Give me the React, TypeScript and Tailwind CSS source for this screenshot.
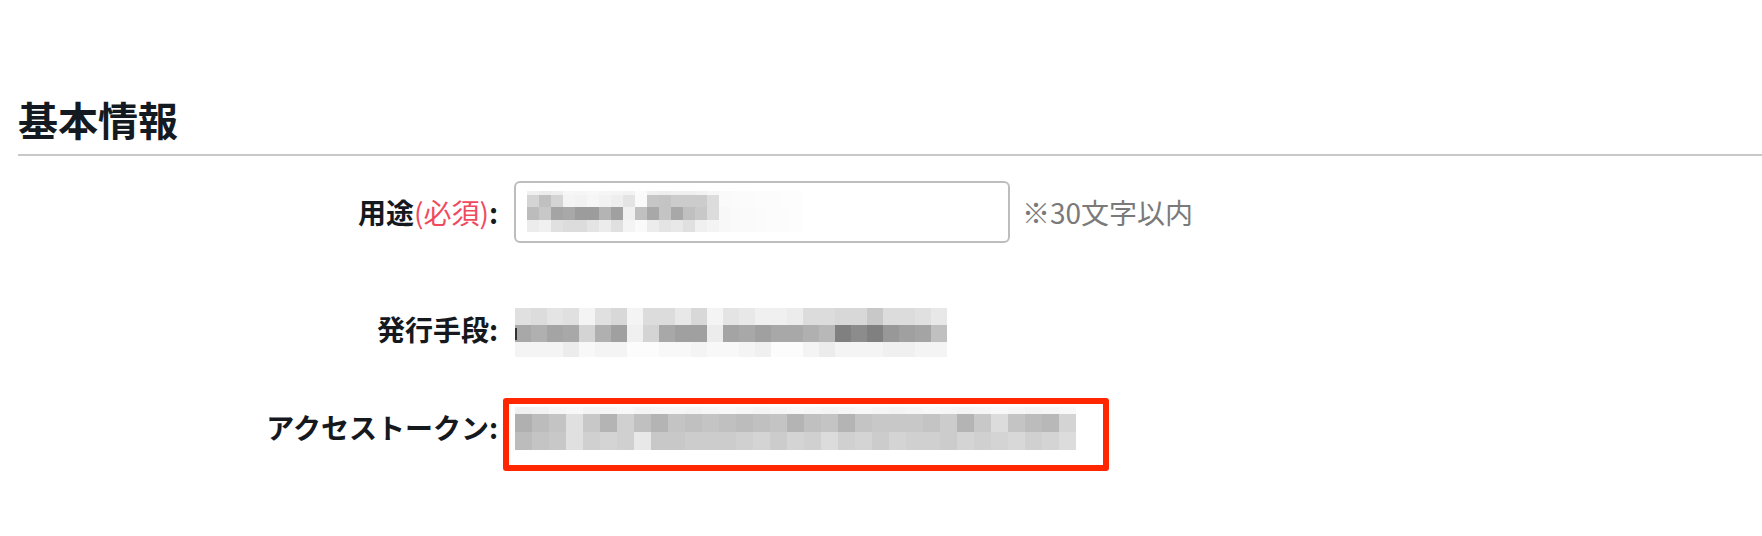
import React from 'react';

type Row = { h: number; v: number[] };

// pixelated (blurred-out) values, given as gray levels per cell
const purposeCells: Row[] = [
  { h: 4, v: [0xf0, 0xec, 0xee, 0xf6, 0xf6, 0xf8, 0xf6, 0xf4, 0xf2, 0xfb, 0xf0, 0xee, 0xf0, 0xf0, 0xf2, 0xf6, 0xfa, 0xfb, 0xfb, 0xfc, 0xfc, 0xfd, 0xfd] },
  { h: 12, v: [0xd4, 0xc0, 0xd4, 0xf4, 0xf2, 0xf6, 0xf2, 0xee, 0xe4, 0xfa, 0xc6, 0xc4, 0xcc, 0xcc, 0xcc, 0xdc, 0xfa, 0xfb, 0xfb, 0xfc, 0xfc, 0xfd, 0xfd] },
  { h: 13, v: [0xbc, 0xc8, 0xa4, 0xa8, 0x9c, 0x9c, 0xb4, 0xa0, 0xf0, 0xc0, 0xa8, 0xc4, 0xa8, 0xc0, 0xc8, 0xdc, 0xf8, 0xfa, 0xfa, 0xfb, 0xfc, 0xfc, 0xfd] },
  { h: 12, v: [0xec, 0xf0, 0xe0, 0xdc, 0xdc, 0xe4, 0xec, 0xe0, 0xf4, 0xfa, 0xec, 0xe4, 0xe8, 0xe0, 0xf0, 0xf4, 0xf8, 0xfa, 0xfa, 0xfb, 0xfc, 0xfc, 0xfd] },
];

const methodCells: Row[] = [
  { h: 17, v: [0xe0, 0xdc, 0xe4, 0xe0, 0xf4, 0xe0, 0xd8, 0xf4, 0xdc, 0xdc, 0xe8, 0xd8, 0xf4, 0xe4, 0xe8, 0xf0, 0xf0, 0xec, 0xdc, 0xdc, 0xd8, 0xd8, 0xc8, 0xdc, 0xdc, 0xe0, 0xe8] },
  { h: 17, v: [0xa8, 0xb0, 0xa4, 0xa8, 0xd4, 0xb0, 0xa0, 0xf0, 0xd4, 0xa8, 0xa0, 0xa0, 0xec, 0xa4, 0xa8, 0xa0, 0xa8, 0xa8, 0xb0, 0xb8, 0x80, 0x8c, 0x80, 0x98, 0xa0, 0xa4, 0xc0] },
  { h: 15, v: [0xf4, 0xf4, 0xf4, 0xec, 0xf8, 0xf4, 0xf4, 0xfc, 0xfc, 0xf8, 0xf8, 0xf4, 0xf8, 0xf8, 0xf4, 0xf0, 0xfc, 0xfc, 0xf4, 0xec, 0xf4, 0xf4, 0xf4, 0xf0, 0xf0, 0xf4, 0xf4] },
];

const tokenCells: Row[] = [
  { h: 7, v: [0xf0, 0xf2, 0xf6, 0xf8, 0xf4, 0xf6, 0xf8, 0xf4, 0xf6, 0xf6, 0xf4, 0xf6, 0xf8, 0xf6, 0xf4, 0xf6, 0xf8, 0xf6, 0xf4, 0xf6, 0xf8, 0xf6, 0xf4, 0xf6, 0xf8, 0xf6, 0xf4, 0xf6, 0xf8, 0xf6, 0xf4, 0xf6, 0xf8] },
  { h: 18, v: [0xb0, 0xbc, 0xc4, 0xe0, 0xc8, 0xb4, 0xd0, 0xc0, 0xb4, 0xc4, 0xc0, 0xc4, 0xc0, 0xbc, 0xc0, 0xc4, 0xb4, 0xc0, 0xc4, 0xb4, 0xc4, 0xc8, 0xc8, 0xc8, 0xc4, 0xcc, 0xb4, 0xc8, 0xdc, 0xc4, 0xbc, 0xb8, 0xd4] },
  { h: 18, v: [0xbc, 0xc4, 0xc8, 0xe0, 0xd0, 0xd4, 0xd0, 0xe8, 0xc8, 0xc8, 0xcc, 0xcc, 0xcc, 0xd0, 0xd4, 0xcc, 0xd4, 0xd0, 0xdc, 0xd0, 0xd4, 0xcc, 0xd4, 0xd0, 0xd0, 0xcc, 0xd4, 0xd0, 0xd4, 0xd8, 0xd0, 0xd4, 0xdc] },
];

function Mosaic({ rows, cell }: { rows: Row[]; cell: number }) {
  return (
    <div className="flex flex-col">
      {rows.map((r, i) => (
        <div key={i} className="flex">
          {r.v.map((g, j) => (
            <div key={j} style={{ width: cell, height: r.h, backgroundColor: `rgb(${g},${g},${g})` }} />
          ))}
        </div>
      ))}
    </div>
  );
}

function Label({ children, className = '' }: { children: React.ReactNode; className?: string }) {
  return (
    <div className={`w-[480px] flex-shrink-0 text-right text-[28px] leading-[36px] font-bold text-[#15191e] ${className}`}>
      {children}
    </div>
  );
}

export default function App() {
  return (
    <div className="min-h-screen bg-white pt-[99px] pl-[18px] font-['Noto_Sans_CJK_JP','Noto_Sans',sans-serif]">
      <h2 className="text-[40px] leading-[40px] font-bold text-[#141a21] pb-[15px] border-b-2 border-[#c8c8c8]">基本情報</h2>

      <div className="mt-[25px] flex flex-col">
        <div className="flex items-center h-[62px]">
          <Label>
            用途<span className="font-normal text-[#f04a5f]">(必須)</span>:
          </Label>
          <div className="ml-[16px] w-[496px] h-[62px] border-2 border-[#bdbdbd] rounded-[6px] pl-[11px] pt-[8px] overflow-hidden">
            <Mosaic rows={purposeCells} cell={12} />
          </div>
          <span className="ml-[12px] text-[28px] leading-[36px] text-[#7a7a7a]">※30文字以内</span>
        </div>

        <div className="mt-[65px] flex items-start">
          <Label className="mt-[3px]">発行手段:</Label>
          <div className="ml-[17px] relative">
            <Mosaic rows={methodCells} cell={16} />
            <div className="absolute left-0 top-[20px] w-[2px] h-[12px] bg-[#333]" />
          </div>
        </div>

        <div className="mt-[41px] flex items-start">
          <Label className="mt-[11px]">アクセストークン:</Label>
          <div className="ml-[5px] w-[606px] h-[73px] border-[6px] border-[#ff2600] rounded-[3px] pl-[6px] pt-[3px] overflow-hidden">
            <Mosaic rows={tokenCells} cell={17} />
          </div>
        </div>
      </div>
    </div>
  );
}
